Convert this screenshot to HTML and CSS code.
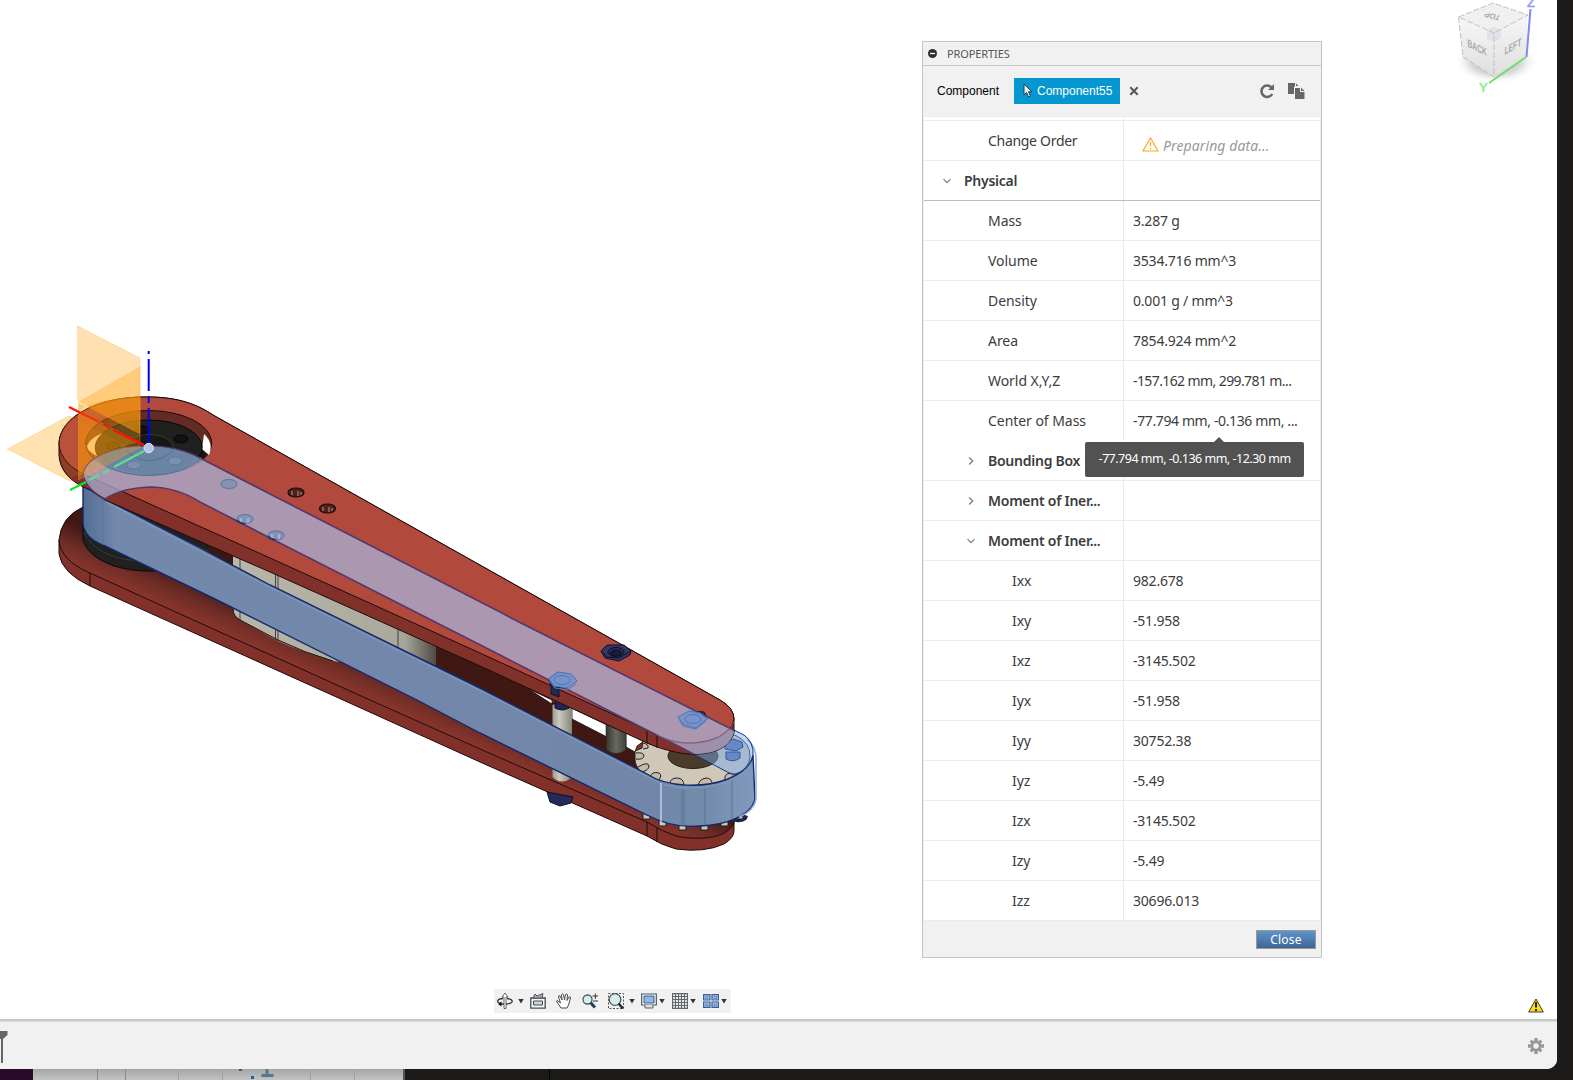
FILE: index.html
```html
<!DOCTYPE html>
<html lang="en">
<head>
<meta charset="utf-8">
<title>Properties</title>
<link rel="stylesheet" href="styles.css">
</head>
<body>
<div class="window">
<main class="viewport">
<svg class="model" width="780" height="880" viewBox="0 0 780 880">
  <defs>
    <linearGradient id="lower" gradientUnits="userSpaceOnUse" x1="300" y1="625" x2="281" y2="667"><stop offset="0" stop-color="#3f1714"/><stop offset=".45" stop-color="#6c2c26"/><stop offset="1" stop-color="#95392f"/></linearGradient>
    <linearGradient id="motor" x1="0" x2="1"><stop offset="0" stop-color="#b8b7a9"/><stop offset=".8" stop-color="#aaa99c"/><stop offset=".85" stop-color="#a5a498"/><stop offset="1" stop-color="#4c4a44"/></linearGradient>
    <linearGradient id="post" x1="0" x2="1"><stop offset="0" stop-color="#9c9b91"/><stop offset=".35" stop-color="#cdcbc0"/><stop offset="1" stop-color="#85847a"/></linearGradient>
    <linearGradient id="post2" x1="0" x2="1"><stop offset="0" stop-color="#343530"/><stop offset=".5" stop-color="#686961"/><stop offset="1" stop-color="#41423d"/></linearGradient>
    <linearGradient id="belt" x1="0" x2="1"><stop offset="0" stop-color="#536d94"/><stop offset=".05" stop-color="#7389ac"/><stop offset=".84" stop-color="#7186a8"/><stop offset=".92" stop-color="#728bab"/><stop offset="1" stop-color="#819abb"/></linearGradient>
    <clipPath id="topPlate"><path d="M59 443C60 417 98 396 148 397C179 397 198 405 213 415L720 700Q734 708 734 719V732C730 750 708 757 680 753Q660 749 647 743L105 500L90 490Q60 478 59 455Z"/></clipPath>
  </defs>
  <path d="M7.500 449L69 416L131 448L70 481Z" fill="#ffe2b0" stroke="#ffdb9c"/>
  <!-- lower plate -->
  <path fill="#81312a" stroke="#1d0c0a" d="M59 540V554Q62 573 90 586L343 700L480 762L647 836Q661 845 676 849Q704 853 724 844Q734 838 734 831V800L600 700Z"/>
  <path fill="url(#lower)" stroke="#1d0c0a" d="M59 540Q61 517 83 507L220 500L430 640L527 688L640 753L734 815V823C728 838 700 841 676 836Q661 831 647 822L480 749L370 700L200 623L90 573Q60 560 59 540Z"/>
  <path fill="#3f1814" d="M436 646L480 664L530 690L640 754V772L436 674Z"/>
  <path stroke="#1d0c0a" d="M90 573V586M647 822V836M657 828V842"/>
  <path fill="#262a58" stroke="#0d1028" d="M547 792L550 802L560 806L571 803L573 797Z"/>
  <!-- lower pulley and motor -->
  <path fill="#20211f" stroke="#0a0a0a" d="M83 523V540C88 558 115 571 148 571H160L240 595L233 548L105 498Z"/>
  <path stroke="#3c3d3a" fill="none" d="M84 532C91 550 116 561 145 561M120 509L220 557M160 520L215 548"/>
  <path fill="#3a1714" d="M211 545L233 555V588L200 570Z"/>
  <path fill="url(#motor)" d="M233 550L280 566L398 617L436 646V674L333 661Q300 651 278 641L240 620Q233 616 233 609Z"/>
  <path stroke="#44443d" fill="none" d="M240 553V620M275.500 566V640M278 568V641M398 627V660"/>
  <path stroke="#17120f" fill="none" d="M233 609Q233 616 240 620L278 640Q305 653 333 661"/>
  <!-- standoffs -->
  <path fill="#fff" stroke="#1d0c0a" stroke-width=".8" d="M527 688L552 700V704ZM572 708L607 725V737L572 719ZM626 732L647 739L637 746L635 752L626 747Z"/>
  <path fill="url(#post)" d="M552.500 705Q562 700 572 705V777Q562 786 552.500 777Z"/>
  <path fill="#22264f" stroke="#0d1028" d="M555 700H569V708Q562 712 555 708Z"/>
  <path fill="url(#post2)" stroke="#222" stroke-width=".6" d="M606 724H626V750Q616 757 606 750Z"/>
  <path fill="#292a26" d="M602 720H623V725Q613 729 602 720Z"/>
  <!-- sprocket -->
  <path fill="#cfc7b8" stroke="#24211c" d="M643 739L647 743L690 753L735 735Q751 743 750 757C749 773 722 786 690 787C659 786 636 775 635 760V751L642 748Z"/>
  <ellipse cx="693" cy="756" rx="25" ry="12.500" fill="#493d29" stroke="#211d17"/>
  <g fill="#c3bcad" stroke="#24211c"><path d="M636 753Q644 752 644 756Q643 760 636 759M638 767Q648 761 649 766Q649 770 642 772M650 777Q652 771 659 773Q663 775 658 781M670 784Q670 778 677 778Q684 778 684 786M698 786Q699 779 706 778Q712 778 712 784M725 780Q724 774 730 773Q736 773 739 777M643 743Q649 744 648 748L643 749"/></g>
  <path fill="#202650" d="M729 812L741 814L748 816Q747 823 736 822L728 819Z"/>
  <g fill="#c9c8bd" stroke="#1f211f"><path d="M643 812h7v7h-7zM659 817h7v9h-7zM679 821h7v9h-7zM701 821h7v9h-7zM721 817h7v9h-7zM737 811h6v8h-6z"/></g>
  <!-- belt band -->
  <path fill="url(#belt)" stroke="#14276a" stroke-width="1.400" d="M83 473Q85 487 105 499L200 548L270 585L480 688L647 774C668 788 704 788 728 779Q750 770 753 755L755 799C752 815 727 825 700 826C678 828 662 823 647 815L480 733L417 700L217 600L103 545Q84 538 83 523Z"/>
  <path fill="none" stroke="#839abf" d="M106 502L270 587.500L480 690.500L646 776Q663 788 690 788Q735 787 752 763"/>
  <path fill="none" stroke="#5c7399" d="M103 499V545M682 790V826M684 790V826M705 789V825M732 780V820"/>
  <path stroke="#bed0e8" stroke-width="1.500" d="M661 783V822"/>
  <path stroke="#8eabe0" stroke-width="1.500" fill="none" d="M747 739Q757 747 756 763V799Q754 811 739 817"/>
  <!-- blue belt top over the sprocket -->
  <path fill="#79a9ee" fill-opacity=".48" stroke="#16337f" d="M734 730L744 735Q754 742 753 756Q750 770 733 775L680 747Q728 752 734 732Z"/>
  <path fill="#6589c6" stroke="#365993" d="M725 743L733 739L742 742L743 747L736 751L725 749ZM726 752V759Q733 763 740 758V752Z"/>
  <!-- upper plate -->
  <path fill="#82312a" fill-rule="evenodd" stroke="#1d0c0a" d="M59 443C60 417 98 396 148 397C179 397 198 405 213 415L720 700Q734 708 734 719V732C730 750 708 757 680 753Q660 749 647 743L480 666L270 572L105 500L90 490Q60 478 59 455Z"/>
  <path fill="#b1493d" stroke="#1d0c0a" d="M59 443C60 417 98 396 148 397C179 397 198 405 213 415L720 700Q734 708 734 719C730 740 702 746 677 742Q661 738 647 730L480 653L270 558L90 477Q60 465 59 443Z"/>
  <path stroke="#1d0c0a" d="M90 477V490M647 730V743M657 735V748"/>
  <!-- bearing recess -->
  <ellipse cx="148.700" cy="443" rx="63" ry="32.500" fill="#642b25" stroke="#1d0c0a"/>
  <path fill="#fff" d="M87 446Q90 438 103 433L96 445L97 456Q87 451 87 446ZM204 434Q214 443 209 455L202 449Z"/>
  <path fill="#151614" d="M200 448L207 454L200 463L193 462Z"/>
  <ellipse cx="148.700" cy="447.500" rx="53.500" ry="27.500" fill="#20211f" stroke="#060606"/>
  <ellipse cx="149" cy="447.500" rx="24" ry="13" fill="#171715" stroke="#383936"/>
  <g fill="#111" stroke="#050505"><ellipse cx="181" cy="439" rx="7" ry="4"/><ellipse cx="113" cy="446" rx="7" ry="4"/><ellipse cx="142" cy="430" rx="7" ry="4"/><ellipse cx="175" cy="461" rx="7" ry="4"/><ellipse cx="134" cy="465" rx="7" ry="4"/></g>
  <!-- holes and nuts -->
  <g fill="#51201b" stroke="#1b0b09" stroke-width="1.200"><ellipse cx="229" cy="484" rx="8" ry="4.500"/><ellipse cx="245" cy="519" rx="8" ry="4.500"/><ellipse cx="276" cy="535.500" rx="8" ry="4.500"/><ellipse cx="296" cy="492.500" rx="8" ry="4.500"/><ellipse cx="327.500" cy="508.500" rx="8" ry="4.500"/></g>
  <path stroke="#a68983" stroke-width="1.200" d="M292 491V495M298 491V496M301 492V495M323 507V511M329 507V512M332 508V511"/>
  <g fill="#343762" stroke="#0d1028"><path d="M601 651L607 645L624 645L631 651L630 655L619 661L605 658Z"/><path d="M548 679L557 672L571 674L577 681L567 688L552 687ZM683 717L690 711L704 712L708 719L696 726Z"/><path d="M601 651L607 657L619 658L631 651" fill="none"/><ellipse cx="616" cy="652" rx="8" ry="4.500" fill="#2a2d58"/><ellipse cx="616" cy="653" rx="5.500" ry="2.800" fill="#171b3c"/></g>
  <path fill="#25294e" stroke="#101431" d="M548 680H551V694L559 697V688Z"/>
  <!-- highlighted belt top -->
  <g clip-path="url(#topPlate)">
    <path fill="#aab9e2" fill-opacity=".7" stroke="#57386a" stroke-width="1.700" d="M83 473C87 457 112 446 147 446Q178 446 200 458L500 612L515 620L753 740V785L733 775L680 747L500 655L270 538L200 502Q176 487 150 487Q121 488 105 499Q84 488 83 473Z"/>
    <path d="M657 735Q673 744 693 743Q724 741 734 722" fill="none" stroke="#8a526a"/>
  </g>
  <path fill="#6c84a4" d="M99 458Q116 446.500 147 446.500Q177 446.500 197 458Q180 475 149 475Q114 472 99 458Z"/>
  <path fill="none" stroke="#4c739c" d="M95 456Q111 475 149 475.500Q183 475 201 458"/>
  <path fill="none" stroke="#566f8e" d="M126 450Q134 460 149 460.500Q165 460 173 450"/>
  <g fill="#8496bd" fill-opacity=".6" stroke="#577d9e"><ellipse cx="229" cy="484" rx="8" ry="4.500"/><ellipse cx="245" cy="519" rx="8" ry="4.500"/><ellipse cx="276" cy="535.500" rx="8" ry="4.500"/><ellipse cx="175" cy="461" rx="7" ry="4"/><ellipse cx="134" cy="465" rx="7" ry="4"/></g>
  <path stroke="#b6cbe4" stroke-width="1.200" d="M241 518V522M248 518V523M272 534V538M279 534V539"/>
  <path stroke="#23336f" stroke-width="1.500" fill="none" d="M237 520Q239 523 245 524M268 536Q270 539 276 540"/>
  <g fill="#7892ca" stroke="#4c76ba"><path d="M549 679L558 672L571 674L577 681L567 688L554 686ZM678 717L689 711L700 713L707 719L696 728L683 724Z"/><path d="M549 681L555 688L567 690L576 684M679 719L683 726L696 729L706 721" fill="none"/><ellipse cx="562" cy="680" rx="8" ry="4.500"/><ellipse cx="693" cy="719" rx="8" ry="4.500"/></g>
  <!-- origin planes and axes -->
  <g fill="#ffa30c" fill-opacity=".32" stroke="#ffb13a" stroke-opacity=".3"><path d="M77.500 326L140 358V434L77.500 400Z"/><path d="M78.500 402L140 367V447L78.500 480Z"/></g>
  <path fill="#ff9a08" fill-opacity=".34" d="M78.500 411Q100 397 140 397V434L78.500 403ZM78.500 411L140 442L110 450Q86 459 83 473L78.500 478Z"/>
  <path fill="#ffa30c" fill-opacity=".1" d="M60 435L69 416L131 448Q86 452 83 473L70 478Q57 463 60 435Z"/>
  <g fill="none" stroke-width="2"><path stroke="#0000f2" d="M148.700 351V354M148.700 359V391M148.700 396V403M148.700 408V444"/><path stroke="#ff1000" d="M69 407L81 413M103 424L110 428M113 430L144 445"/><path stroke="#ef3510" d="M81 413L99 422"/><path stroke="#00ee16" d="M70 490L86 482"/><path stroke="#5be385" d="M89 480L99 475M103 473L109 470M114 467L144 451"/></g>
  <circle cx="148.700" cy="448" r="4.700" fill="#b5c5e5" stroke="#e0e6f3"/>
</svg>

<svg class="viewcube" width="110" height="100" viewBox="0 0 110 100">
  <defs><radialGradient id="shade"><stop offset="0" stop-color="#777" stop-opacity=".75"/><stop offset=".6" stop-color="#999" stop-opacity=".35"/><stop offset="1" stop-color="#fff" stop-opacity="0"/></radialGradient>
  <linearGradient id="face" x1="0" y1="0" x2="0" y2="1"><stop offset="0" stop-color="#f7f7f7"/><stop offset="1" stop-color="#dedede"/></linearGradient></defs>
  <ellipse cx="46" cy="62" rx="43" ry="22" fill="url(#shade)"/>
  <path fill="#f0f0f0" d="M8.500 17L43 3L78 15L44 33Z"/>
  <path fill="url(#face)" d="M8.500 17L44 33V77L13 57Z"/><path fill="url(#face)" d="M44 33L78 15L76 57L44 77Z"/>
  <path fill="#dfe2e6" d="M37 30L43 27L51 29V38L44 42L37 39Z"/>
  <path fill="none" stroke="#c0c0c0" stroke-dasharray="6 2" d="M8.500 17L43 3L78 15L44 33ZM8.500 17L13 57L44 77V33"/>
  <path stroke="#8585f7" stroke-width="2" d="M80.500 9L76.500 57"/><path stroke="#74dc74" stroke-width="2" d="M76 57L39 83"/>
  <g class="cube-text"><text transform="matrix(.61 .31 .02 1 17.500 46.500)">BACK</text><text transform="matrix(.61 -.35 -.02 1 54.500 55)">LEFT</text><text transform="matrix(-.66 -.19 .35 -.6 51 16)">TOP</text></g>
  <text x="77" y="7" class="axis-z">Z</text><text x="29" y="92" class="axis-y">Y</text>
</svg>

<section class="panel">
  <header class="panel-title"><svg width="9" height="9"><circle cx="4.500" cy="4.500" r="4.500" fill="#303030"/><path d="M2 4.500h5" stroke="#fff" stroke-width="1.300"/></svg><span>PROPERTIES</span></header>
  <div class="selection">
    <span class="selection-label">Component</span>
    <span class="chip"><svg width="10" height="15" viewBox="0 0 10 15"><path d="M1 1V12L3.500 9.500L5.500 14L7.500 13L5.500 8.800H9Z" fill="#e9eef1" stroke="#263a44"/></svg><span>Component55</span></span>
    <svg class="clear" width="10" height="10" viewBox="0 0 10 10"><path d="M1.300 1.300L8.700 8.700M8.700 1.300L1.300 8.700" stroke="#555" stroke-width="2"/></svg>
    <svg class="refresh" width="16" height="16" viewBox="0 0 16 16"><path d="M12.500 4.500A5.700 5.700 0 1 0 13.200 11" fill="none" stroke="#666" stroke-width="2.500"/><path d="M15 1V7H9Z" fill="#666"/></svg>
    <svg class="copy" width="17" height="16" viewBox="0 0 17 16"><path d="M0 0H7V3.500H6V11H0ZM8 .500L10.500 3H8Z" fill="#666"/><path d="M7 5H12V9H16.500V16H7ZM13 4.500L16.500 8H13Z" fill="#666"/></svg>
  </div>
  <div class="table">
    <div class="row stub"><div class="name"></div><div></div></div>
    <div class="row"><div class="name l2 tightest">Change Order</div><div class="value preparing"><svg width="17" height="15" viewBox="0 0 17 15"><path d="M8.500 1L16 14H1ZM8.500 5V9.500M8.500 11V12.300" fill="none" stroke="#f9a825" stroke-width="1.200"/></svg><i>Preparing data...</i></div></div>
    <div class="row group"><div class="name l1 bold"><svg class="chev" viewBox="0 0 10 10"><path d="M1.500 3.200L5 6.700L8.500 3.200"/></svg>Physical</div><div class="value"></div></div>
    <div class="row"><div class="name l2">Mass</div><div class="value">3.287 g</div></div>
    <div class="row"><div class="name l2">Volume</div><div class="value">3534.716 mm^3</div></div>
    <div class="row"><div class="name l2">Density</div><div class="value">0.001 g / mm^3</div></div>
    <div class="row"><div class="name l2">Area</div><div class="value">7854.924 mm^2</div></div>
    <div class="row"><div class="name l2">World X,Y,Z</div><div class="value world">-157.162 mm, 299.781 m...</div></div>
    <div class="row hover"><div class="name l2">Center of Mass</div><div class="value center">-77.794 mm, -0.136 mm, ...<div class="tooltip">-77.794 mm, -0.136 mm, -12.30 mm</div></div></div>
    <div class="row"><div class="name l2 bold"><svg class="chev" viewBox="0 0 10 10"><path d="M3.200 1.500L6.700 5L3.200 8.500"/></svg>Bounding Box</div><div class="value"></div></div>
    <div class="row"><div class="name l2 bold"><svg class="chev" viewBox="0 0 10 10"><path d="M3.200 1.500L6.700 5L3.200 8.500"/></svg>Moment of Iner...</div><div class="value"></div></div>
    <div class="row"><div class="name l2 bold"><svg class="chev" viewBox="0 0 10 10"><path d="M1.500 3.200L5 6.700L8.500 3.200"/></svg>Moment of Iner...</div><div class="value"></div></div>
    <div class="row"><div class="name l3">Ixx</div><div class="value">982.678</div></div>
    <div class="row"><div class="name l3">Ixy</div><div class="value">-51.958</div></div>
    <div class="row"><div class="name l3">Ixz</div><div class="value">-3145.502</div></div>
    <div class="row"><div class="name l3">Iyx</div><div class="value">-51.958</div></div>
    <div class="row"><div class="name l3">Iyy</div><div class="value">30752.38</div></div>
    <div class="row"><div class="name l3">Iyz</div><div class="value">-5.49</div></div>
    <div class="row"><div class="name l3">Izx</div><div class="value">-3145.502</div></div>
    <div class="row"><div class="name l3">Izy</div><div class="value">-5.49</div></div>
    <div class="row"><div class="name l3">Izz</div><div class="value">30696.013</div></div>
  </div>
  <footer><button>Close</button></footer>
</section>

<nav class="navbar">
  <svg width="16" height="16" viewBox="0 0 16 16"><path d="M6 5.500C0 6-1 9 3 10.500M10 5.500C16 6 18 10 10 11H4" fill="none" stroke="#30383c" stroke-width="1.300"/><path d="M8 0L11 4H9V15.500H7V4H5Z" fill="#fff" stroke="#444" stroke-width=".8"/><path d="M1 11L4.500 8.500V13.500Z" fill="#111"/></svg><b class="caret wide"></b>
  <svg width="16" height="16" viewBox="0 0 16 16"><path d="M.800 5H15.200V15.200H.800Z" fill="#f5f8f9" stroke="#444c51" stroke-width="1.300"/><path d="M3.500 8H12.500V12H3.500Z" fill="#ccd5da" stroke="#444c51"/><path d="M3 5L5 1L7 3L13 .500L12 5Z" fill="#a8b0b3" stroke="#555"/></svg>
  <svg class="gap" width="16" height="16" viewBox="0 0 16 16"><path d="M5 15L1 9Q0 7 2 8L4.500 10L2.500 4Q2.500 2 4 3L6 7L5.500 1.500Q6.500 0 7.500 1.500L8.500 7L9.500 1.500Q11 0 11.500 2L11 7.500L13 4Q14.500 3 14.500 5L12.500 12L11 15Z" fill="#fff" stroke="#4b4c50"/></svg>
  <svg class="gap" width="16" height="16" viewBox="0 0 16 16"><circle cx="5.500" cy="6.500" r="4.500" fill="#d8edf0" stroke="#4b5b62" stroke-width="1.300"/><path d="M8.500 9.500L13 14.500" stroke="#244159" stroke-width="3"/><path d="M10.500 3H16M13.300.500V6M11 8H16" stroke="#333"/></svg>
  <svg class="gap" width="16" height="16" viewBox="0 0 16 16"><path d="M.500.500H15.500V15.500H.500Z" fill="none" stroke="#555" stroke-dasharray="2 1.500"/><circle cx="7" cy="6.500" r="5.800" fill="#d8edeb" stroke="#4b5b62" stroke-width="1.300"/><path d="M10.500 10.500L15 15.500" stroke="#222f38" stroke-width="2.600"/></svg><b class="caret wide"></b>
  <svg width="16" height="16" viewBox="0 0 16 16"><path d="M.700 1H15.300V12H.700Z" fill="#fff" stroke="#4a555e" stroke-width="1.200"/><path d="M3 3H13V10H3Z" fill="#91bae9" stroke="#365b91"/><path d="M4 12V15H12V12" fill="#ddd" stroke="#59636a"/></svg><b class="caret tight"></b>
  <svg width="16" height="16" viewBox="0 0 16 16"><path fill="#f8f8f8" stroke="#62666c" stroke-width="1.200" d="M.600.600H15.400V15.400H.600ZM3.500.600V15M6.500.600V15M9.500.600V15M12.500.600V15M.600 3.500H15M.600 6.500H15M.600 9.500H15M.600 12.500H15"/></svg><b class="caret tight"></b>
  <svg width="16" height="16" viewBox="0 0 16 16"><path fill="#a9c8f3" stroke="#3d5e92" stroke-width="1.200" d="M.600 1.600H7V7H.600ZM9 1.600H15.400V7H9ZM.600 9H7V14.400H.600ZM9 9H15.400V14.400H9Z"/><path fill="none" stroke="#668ac0" d="M2.500 3.500h2.500v2H2.500zM11 3.500h2.500v2H11zM2.500 11h2.500v2H2.500zM11 11h2.500v2H11z"/></svg><b class="caret last"></b>
</nav>
<svg class="warning" width="16" height="15" viewBox="0 0 16 15"><path d="M8 1L15.300 14H.700Z" fill="#ffda16" stroke="#3b3b27"/><path d="M8 4V9.500M8 11V13" stroke="#222" stroke-width="2"/></svg>
</main>
<footer class="timeline">
  <svg class="marker" width="8" height="33"><path d="M0 0H7.500V4L3 8V32H1V8H0Z" fill="#666"/></svg>
  <svg class="gear" width="16" height="16" viewBox="-8 -8 16 16"><g fill="#999"><circle r="5.500"/><path d="M-1.700-8H1.700V8H-1.700ZM-8-1.700V1.700H8V-1.700Z"/><path transform="rotate(45)" d="M-1.600-7.500H1.600V7.500H-1.600ZM-7.500-1.600V1.600H7.500V-1.600Z"/></g><circle r="2.700" fill="#f1f1f1"/></svg>
</footer>
</div>
<svg class="desktop" width="1573" height="11" viewBox="0 0 1573 11">
  <defs><linearGradient id="under" x1="0" x2="0" y1="0" y2="1"><stop offset="0" stop-color="#a5a5a5"/><stop offset="1" stop-color="#c3c3c3"/></linearGradient></defs>
  <path fill="#2b0a2c" d="M0 0H33V11H0Z"/><path fill="url(#under)" d="M33 0H403V11H33Z"/><path stroke="#888" d="M97.500 0V11M125.500 0V11"/><path stroke="#a0a0a0" d="M178.500 0V11M222.500 0V11M310.500 0V11M354.500 0V11"/><path stroke="#555" stroke-width="2" d="M404 0V11"/><path fill="#537990" d="M265.500 0h3v5h5v3h-12V5h4z"/><path fill="#1c6397" d="M239 0h3v2h-3zM251 7h3v3h-3z"/><path fill="#030303" d="M549 0h1v11h-1z"/>
</svg>
</body>
</html>
```
FILE: styles.css
```css
* { box-sizing: border-box; }
body { margin: 0; width: 1573px; height: 1080px; overflow: hidden; background: #1c1b1a; color: #3c3c3c; font-family: "Noto Sans", "Open Sans", sans-serif; }
svg { display: block; flex: none; }
.window { width: 1557px; height: 1069px; display: flex; flex-direction: column; overflow: hidden; background: #fff; border-bottom-right-radius: 10px; }
.viewport { position: relative; flex: 1; }
.model { position: absolute; left: 0; top: 0; }
.viewcube { position: absolute; left: 1450px; top: 0; }
.cube-text { font: bold 11px "Liberation Sans", sans-serif; fill: #a8a8aa; }
.axis-z, .axis-y { font: 13px "Liberation Sans", sans-serif; fill: #9696fa; stroke: #9696fa; stroke-width: .5; }
.axis-y { fill: #83ef83; stroke: #83ef83; }

.panel { position: absolute; left: 922px; top: 41px; width: 400px; height: 917px; display: flex; flex-direction: column; background: #f1f1f1; border: 1px solid #c4c4c4; }
.panel-title { height: 24px; display: flex; align-items: center; gap: 10px; padding: 0 0 1px 5px; border-bottom: 1px solid #c8c8c8; font-size: 11px; color: #555; }
.panel-title span { letter-spacing: -.1px; }
.selection { height: 50px; display: flex; align-items: center; padding: 0 16px 1px 14px; font: 12px "Liberation Sans", Arial, sans-serif; color: #000; }
.selection-label { width: 77px; }
.chip { width: 106px; height: 26px; display: flex; align-items: center; gap: 4px; padding-left: 9px; background: #0597d0; color: #fff; }
.clear { margin-left: 9px; }
.refresh { margin-left: auto; }
.copy { margin-left: 13px; }
.table { background: #fff; border-top: 1px solid #ebebeb; border-left: 1px solid #ebebeb; border-right: 1px solid #ebebeb; }
.row { display: grid; grid-template-columns: 200px 1fr; height: 40px; border-bottom: 1px solid #ebebeb; font-size: 14px; }
.stub { height: 4px; }
.group { border-bottom-color: #bcbcbc; }
.hover { border-bottom-color: transparent; }
.name, .value { display: flex; align-items: center; white-space: nowrap; }
.name { border-right: 1px solid #ebebeb; letter-spacing: -.05px; }
.l1 { padding-left: 18px; }
.l2 { padding-left: 64px; }
.l2.bold { padding-left: 42px; }
.l3 { padding-left: 88px; }
.bold { font-weight: 600; gap: 12px; letter-spacing: -.25px; }
.tightest { letter-spacing: -.3px; }
.chev { width: 10px; height: 10px; fill: none; stroke: #777; stroke-width: 1.2; }
.value { position: relative; padding-left: 9px; letter-spacing: -.2px; }
.world { letter-spacing: -.6px; }
.center { letter-spacing: -.38px; }
.preparing { padding: 10px 0 0 18px; gap: 4px; color: #999; letter-spacing: .1px; }
.preparing svg { margin-top: -2px; }
.tooltip { position: absolute; z-index: 2; left: -39px; top: 41px; width: 219px; height: 35px; border-radius: 2px; background: #525252; color: #fff; font-size: 12.5px; line-height: 34px; text-align: center; letter-spacing: -.5px; }
.tooltip::before { content: ""; position: absolute; left: 129px; top: -5px; border: 5px solid transparent; border-top: 0; border-bottom-color: #525252; }
.panel footer { display: flex; flex: 1; justify-content: flex-end; padding: 9px 5px 0 0; }
button { width: 60px; height: 19px; padding: 0; border: 1px solid #999; background: linear-gradient(#5f94ca, #3c6697); color: #fff; font: 12px/16px "Noto Sans", sans-serif; letter-spacing: .2px; }

.navbar { position: absolute; left: 494px; top: 989px; width: 237px; height: 24px; padding-left: 3px; display: flex; align-items: center; background: #f1f1f1; }
.caret { width: 6px; height: 5px; margin: 0 6px 0 5px; background: #333; clip-path: polygon(0 0, 100% 0, 50% 100%); }
.tight { margin: 0 7px 0 2px; }
.last { margin: 0 0 0 2px; }
.gap { margin-left: 10px; }
.warning { position: absolute; left: 1528px; top: 998px; }
.timeline { height: 50px; display: flex; justify-content: space-between; padding: 10px 13px 0 0; background: #f1f1f1; border-top: 2px solid #c8c8c8; box-shadow: inset 0 1px #dedede; }
.gear { margin-top: 7px; }
```
